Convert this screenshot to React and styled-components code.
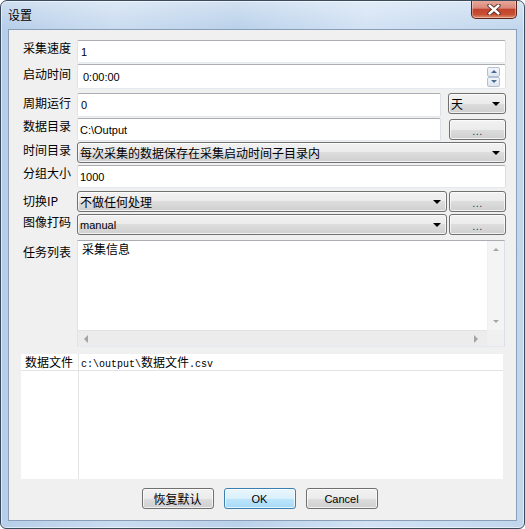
import React from 'react';
import styled, { createGlobalStyle } from 'styled-components';

const cjk = `"Noto Sans CJK SC", "Noto Sans", sans-serif`;
const ui = `"Liberation Sans", "Noto Sans CJK SC", sans-serif`;

const GlobalStyle = createGlobalStyle`
  html, body {
    margin: 0;
    padding: 0;
    background: #ffffff;
    overflow: hidden;
  }
  body {
    font-family: ${cjk};
  }
`;

const Frame = styled.div`
  width: 525px;
  height: 529px;
  box-sizing: border-box;
  border: 1px solid #3a4b5e;
  border-radius: 7px 7px 6px 6px;
  background:
    linear-gradient(180deg, rgba(255, 255, 255, 0.35) 0, rgba(255, 255, 255, 0) 28px),
    linear-gradient(90deg, #b6cee9 0%, #cadcf0 22%, #bad1ea 45%, #d2e2f4 70%, #c1d6ed 100%);
  box-shadow: inset 0 0 0 1px rgba(255, 255, 255, 0.55);
  display: flex;
  flex-direction: column;
  overflow: hidden;
`;

const TitleBar = styled.div`
  height: 28px;
  display: flex;
  align-items: flex-start;
  justify-content: space-between;
  padding: 0 7px 0 7px;
`;

const Title = styled.div`
  font-family: ${cjk};
  font-size: 12px;
  line-height: 16px;
  margin-top: 6px;
  color: #000;
`;

const CloseButton = styled.div`
  width: 46px;
  height: 19px;
  margin-top: -1px;
  box-sizing: border-box;
  border: 1px solid #5a2419;
  border-top: none;
  border-radius: 0 0 5px 5px;
  background: linear-gradient(180deg, #e9ad9e 0%, #d9877a 45%, #c2432d 52%, #c74f33 80%, #e2906f 100%);
  box-shadow: inset 0 0 0 1px rgba(255, 255, 255, 0.35);
  display: flex;
  align-items: center;
  justify-content: center;
`;

const Client = styled.div`
  flex: 1;
  margin: 0 7px 7px 7px;
  border: 1px solid #8a9fb7;
  background: #f0f0f0;
  display: flex;
  flex-direction: column;
  padding-top: 10px;
`;

const Row = styled.div`
  display: flex;
  height: ${(p) => p.$h}px;
  margin-top: ${(p) => p.$mt || 0}px;
  padding: 0 ${(p) => (p.$pr === undefined ? 10 : p.$pr)}px 0 14px;
  flex: none;
`;

const Label = styled.div`
  width: 54px;
  flex: none;
  font-family: ${cjk};
  font-size: 12px;
  line-height: 16px;
  padding-top: ${(p) => p.$lt || 0}px;
  color: #000;
  white-space: nowrap;
`;

const TextBox = styled.div`
  flex: 1;
  box-sizing: border-box;
  height: 100%;
  background: #fff;
  border: 1px solid;
  border-color: #abadb3 #dbdfe6 #e3e9ef #e2e3ea;
  border-radius: 2px;
  display: flex;
  align-items: center;
  padding-left: ${(p) => p.$pl || 2}px;
  font-family: ${ui};
  font-size: 11px;
  color: #000;
`;

const Value = styled.span`
  flex: 1;
`;

const Spin = styled.div`
  display: flex;
  flex-direction: column;
  gap: 0;
  margin-right: 5px;
`;

const SpinPart = styled.div`
  width: 13px;
  height: 10px;
  box-sizing: border-box;
  border: 1px solid #b3c0d2;
  border-radius: 2px;
  background: linear-gradient(180deg, #f3f6fb, #dde5f0);
  display: flex;
  align-items: center;
  justify-content: center;
`;

const Tri = styled.span`
  width: 0;
  height: 0;
  border-left: ${(p) => p.$s || 3}px solid transparent;
  border-right: ${(p) => p.$s || 3}px solid transparent;
  ${(p) => (p.$up ? 'border-bottom' : 'border-top')}: ${(p) => p.$hgt || 3}px solid ${(p) => p.$c || '#000'};
`;

const SideTri = styled.span`
  width: 0;
  height: 0;
  border-top: 4px solid transparent;
  border-bottom: 4px solid transparent;
  ${(p) => (p.$left ? 'border-right' : 'border-left')}: 4px solid #a3a3a3;
`;

const Combo = styled.div`
  box-sizing: border-box;
  height: 21px;
  ${(p) => (p.$w ? `width: ${p.$w}px; flex: none;` : 'flex: 1;')}
  margin-left: ${(p) => p.$ml || 0}px;
  border: 1px solid #707070;
  border-radius: 3px;
  background: linear-gradient(180deg, #f2f2f2 0%, #ebebeb 50%, #dddddd 50%, #cfcfcf 100%);
  box-shadow: inset 0 0 0 1px rgba(255, 255, 255, 0.7);
  display: flex;
  align-items: center;
  padding: 0 5px 0 2px;
  font-family: ${cjk};
  font-size: 12px;
  color: #000;
`;

const ComboText = styled.span`
  flex: 1;
  white-space: nowrap;
  overflow: hidden;
  font-family: ${(p) => (p.$latin ? ui : cjk)};
  font-size: ${(p) => (p.$latin ? 11 : 12)}px;
`;

const SmallButton = styled.div`
  box-sizing: border-box;
  width: 57px;
  height: 21px;
  flex: none;
  margin-left: ${(p) => p.$ml || 2}px;
  margin-top: ${(p) => p.$mt || 0}px;
  border: 1px solid #707070;
  border-radius: 3px;
  background: linear-gradient(180deg, #f2f2f2 0%, #ebebeb 50%, #dddddd 50%, #cfcfcf 100%);
  box-shadow: inset 0 0 0 1px rgba(255, 255, 255, 0.7);
  display: flex;
  align-items: center;
  justify-content: center;
  padding-top: 2px;
  font-family: ${ui};
  font-size: 11px;
  color: #1c3a5a;
  letter-spacing: 0.5px;
`;

const ListBox = styled.div`
  flex: 1;
  box-sizing: border-box;
  height: 100%;
  background: #fff;
  border: 1px solid;
  border-color: #abadb3 #dbdfe6 #e3e9ef #e2e3ea;
  display: grid;
  grid-template-columns: 1fr 17px;
  grid-template-rows: 1fr 16px;
`;

const ListContent = styled.div`
  padding-left: 4px;
  font-family: ${cjk};
  font-size: 12px;
  line-height: 16px;
  color: #000;
`;

const VScroll = styled.div`
  background: #f4f4f4;
  border-left: 1px solid #f0f0f0;
  display: flex;
  flex-direction: column;
  justify-content: space-between;
  align-items: center;
  padding: 7px 0 7px;
`;

const HScroll = styled.div`
  background: #ececec;
  border-top: 1px solid #e2e2e2;
  display: flex;
  justify-content: space-between;
  align-items: center;
  padding: 0 9px 0 6px;
`;

const Corner = styled.div`
  background: #f0f0f0;
`;

const Table = styled.div`
  margin: 7px 13px 0 12px;
  height: 125px;
  flex: none;
  background: #e3e3e3;
  display: grid;
  grid-template-columns: 57px 1fr;
  grid-template-rows: 16px 1fr;
  gap: 1px;
`;

const Cell = styled.div`
  background: #fff;
  padding-left: ${(p) => p.$pl || 3}px;
  font-family: ${cjk};
  font-size: 12px;
  line-height: 16px;
  color: #000;
  white-space: nowrap;
`;

const Mono = styled.span`
  font-family: "Liberation Mono", monospace;
  font-size: 10px;
`;

const ButtonBar = styled.div`
  display: flex;
  justify-content: center;
  gap: 10px;
  margin-top: 9px;
  padding-right: 6px;
`;

const DlgButton = styled.div`
  box-sizing: border-box;
  width: 72px;
  height: 21px;
  border: 1px solid ${(p) => (p.$primary ? '#3c7fb1' : '#707070')};
  border-radius: 3px;
  background: ${(p) =>
    p.$primary
      ? 'linear-gradient(180deg, #eaf6fd 0%, #d9f0fc 50%, #bee6fd 50%, #a7d9f5 100%)'
      : 'linear-gradient(180deg, #f2f2f2 0%, #ebebeb 50%, #dddddd 50%, #cfcfcf 100%)'};
  box-shadow: inset 0 0 0 1px rgba(255, 255, 255, 0.7);
  display: flex;
  align-items: center;
  justify-content: center;
  font-family: ${(p) => (p.$latin ? ui : cjk)};
  font-size: ${(p) => (p.$latin ? 11 : 12)}px;
  color: #000;
`;

const CloseGlyph = () => (
  <svg width="14" height="11" viewBox="0 0 14 11">
    <path d="M2.5 1.5 L11.5 9.5 M11.5 1.5 L2.5 9.5" stroke="#4b231b" strokeWidth="4.2" strokeLinecap="round" />
    <path d="M2.5 1.5 L11.5 9.5 M11.5 1.5 L2.5 9.5" stroke="#ffffff" strokeWidth="2.4" strokeLinecap="round" />
  </svg>
);

const Arrow = () => <Tri $s={4} $hgt={4} />;

export default function App() {
  return (
    <>
      <GlobalStyle />
      <Frame>
        <TitleBar>
          <Title>设置</Title>
          <CloseButton>
            <CloseGlyph />
          </CloseButton>
        </TitleBar>
        <Client>
          <Row $h={23}>
            <Label>采集速度</Label>
            <TextBox $pl={3}>1</TextBox>
          </Row>
          <Row $h={25} $mt={1}>
            <Label $lt={2}>启动时间</Label>
            <TextBox $pl={5}>
              <Value>0:00:00</Value>
              <Spin>
                <SpinPart>
                  <Tri $up $s={3} $hgt={3} $c="#4a6a94" />
                </SpinPart>
                <SpinPart>
                  <Tri $s={3} $hgt={3} $c="#4a6a94" />
                </SpinPart>
              </Spin>
            </TextBox>
          </Row>
          <Row $h={24} $mt={4}>
            <Label $lt={2}>周期运行</Label>
            <TextBox $pl={3}>0</TextBox>
            <Combo $w={58} $ml={7}>
              <ComboText>天</ComboText>
              <Arrow />
            </Combo>
          </Row>
          <Row $h={23} $mt={1}>
            <Label>数据目录</Label>
            <TextBox $pl={2}>C:\Output</TextBox>
            <SmallButton $ml={8} $mt={1}>...</SmallButton>
          </Row>
          <Row $h={21} $mt={1}>
            <Label>时间目录</Label>
            <Combo>
              <ComboText>每次采集的数据保存在采集启动时间子目录内</ComboText>
              <Arrow />
            </Combo>
          </Row>
          <Row $h={23} $mt={2}>
            <Label>分组大小</Label>
            <TextBox $pl={2}>1000</TextBox>
          </Row>
          <Row $h={21} $mt={3}>
            <Label $lt={2}>切换IP</Label>
            <Combo>
              <ComboText>不做任何处理</ComboText>
              <Arrow />
            </Combo>
            <SmallButton>...</SmallButton>
          </Row>
          <Row $h={21} $mt={2}>
            <Label>图像打码</Label>
            <Combo>
              <ComboText $latin>manual</ComboText>
              <Arrow />
            </Combo>
            <SmallButton>...</SmallButton>
          </Row>
          <Row $h={107} $mt={5} $pr={11}>
            <Label $lt={4}>任务列表</Label>
            <ListBox>
              <ListContent>采集信息</ListContent>
              <VScroll>
                <Tri $up $s={3} $hgt={3} $c="#a6a6a6" />
                <Tri $s={3} $hgt={3} $c="#a6a6a6" />
              </VScroll>
              <HScroll>
                <SideTri $left />
                <SideTri />
              </HScroll>
              <Corner />
            </ListBox>
          </Row>
          <Table>
            <Cell $pl={4}>数据文件</Cell>
            <Cell $pl={2}>
              <Mono>c:\output\</Mono>数据文件<Mono>.csv</Mono>
            </Cell>
            <Cell />
            <Cell />
          </Table>
          <ButtonBar>
            <DlgButton>恢复默认</DlgButton>
            <DlgButton $primary $latin>OK</DlgButton>
            <DlgButton $latin>Cancel</DlgButton>
          </ButtonBar>
        </Client>
      </Frame>
    </>
  );
}
